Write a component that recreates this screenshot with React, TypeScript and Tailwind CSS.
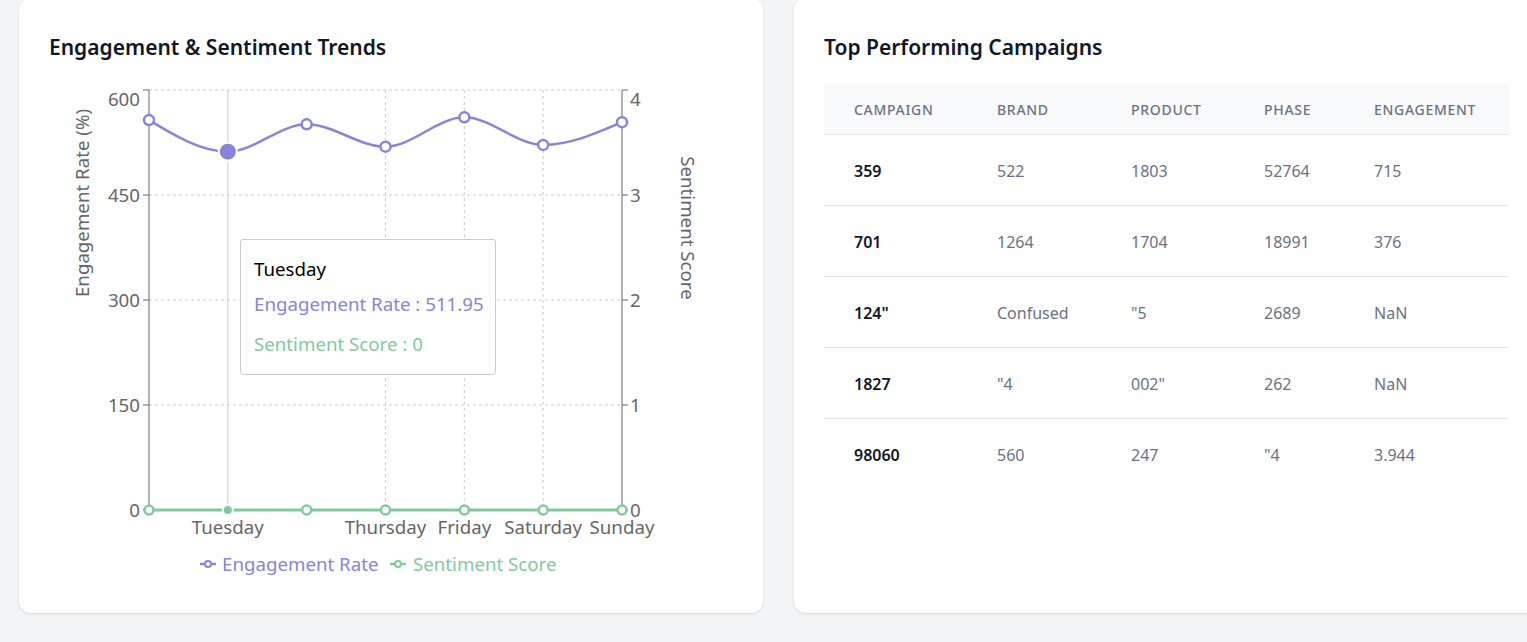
import React from "react";

const PURPLE = "#8884d8";
const GREEN = "#82ca9d";
const AXIS = "#666";
const GRID = "#ccc";

const days = ["Monday", "Tuesday", "Wednesday", "Thursday", "Friday", "Saturday", "Sunday"];
const engagement = [557, 511.95, 551, 519, 561, 521.5, 554];

// plot box in page coordinates
const LEFT = 149;
const RIGHT = 622;
const TOP = 90;
const BOTTOM = 510;

const xAt = (i: number) => LEFT + ((RIGHT - LEFT) / 6) * i;
const yLeft = (v: number) => BOTTOM - (v / 600) * (BOTTOM - TOP);

type Pt = [number, number];

// same maths as d3 curveMonotoneX
function monotonePath(pts: Pt[]) {
  const n = pts.length;
  const sign = (v: number) => (v < 0 ? -1 : 1);
  const t: number[] = new Array(n).fill(0);
  for (let i = 1; i < n - 1; i++) {
    const [x0, y0] = pts[i - 1];
    const [x1, y1] = pts[i];
    const [x2, y2] = pts[i + 1];
    const h0 = x1 - x0;
    const h1 = x2 - x1;
    const s0 = (y1 - y0) / h0;
    const s1 = (y2 - y1) / h1;
    const p = (s0 * h1 + s1 * h0) / (h0 + h1);
    t[i] = (sign(s0) + sign(s1)) * Math.min(Math.abs(s0), Math.abs(s1), 0.5 * Math.abs(p)) || 0;
  }
  const h = pts[1][0] - pts[0][0];
  t[0] = (3 * (pts[1][1] - pts[0][1])) / h / 2 - t[1] / 2;
  const hl = pts[n - 1][0] - pts[n - 2][0];
  t[n - 1] = (3 * (pts[n - 1][1] - pts[n - 2][1])) / hl / 2 - t[n - 2] / 2;

  let d = `M${pts[0][0]},${pts[0][1]}`;
  for (let i = 0; i < n - 1; i++) {
    const [x0, y0] = pts[i];
    const [x1, y1] = pts[i + 1];
    const dx = (x1 - x0) / 3;
    d += `C${x0 + dx},${y0 + dx * t[i]},${x1 - dx},${y1 - dx * t[i + 1]},${x1},${y1}`;
  }
  return d;
}

const leftTicks = [
  { v: 0, y: 510, ly: 510 },
  { v: 150, y: 405, ly: 405 },
  { v: 300, y: 300, ly: 300 },
  { v: 450, y: 195, ly: 195 },
  { v: 600, y: 90, ly: 99 },
];
const rightTicks = [
  { v: 0, y: 510, ly: 510 },
  { v: 1, y: 405, ly: 405 },
  { v: 2, y: 300, ly: 300 },
  { v: 3, y: 195, ly: 195 },
  { v: 4, y: 90, ly: 99 },
];
const shownDays = [1, 3, 4, 5, 6];

function TrendChart() {
  const purplePts: Pt[] = engagement.map((v, i) => [xAt(i), yLeft(v)]);
  const greenPts: Pt[] = days.map((_, i) => [xAt(i), BOTTOM]);

  return (
    <div className="relative mt-[14px] h-[515px] w-[684px]">
      <svg width={684} height={515} viewBox="49 75 684 515" fontSize={18.7}>
        {/* grid */}
        {[90, 195, 300, 405].map((y) => (
          <line key={y} x1={LEFT} x2={RIGHT} y1={y} y2={y} stroke={GRID} strokeDasharray="3 3" />
        ))}
        {[3, 4, 5].map((i) => (
          <line key={i} x1={xAt(i)} x2={xAt(i)} y1={TOP} y2={BOTTOM} stroke={GRID} strokeDasharray="3 3" />
        ))}

        {/* axes */}
        <line x1={LEFT} x2={LEFT} y1={TOP} y2={BOTTOM} stroke={AXIS} />
        <line x1={RIGHT} x2={RIGHT} y1={TOP} y2={BOTTOM} stroke={AXIS} />
        <line x1={LEFT} x2={RIGHT} y1={BOTTOM} y2={BOTTOM} stroke={AXIS} />
        {leftTicks.map((t) => (
          <g key={t.v}>
            <line x1={LEFT - 6} x2={LEFT} y1={t.y} y2={t.y} stroke={AXIS} />
            <text x={140} y={t.ly} dy="0.355em" textAnchor="end" fill={AXIS}>
              {t.v}
            </text>
          </g>
        ))}
        {rightTicks.map((t) => (
          <g key={t.v}>
            <line x1={RIGHT} x2={RIGHT + 6} y1={t.y} y2={t.y} stroke={AXIS} />
            <text x={630} y={t.ly} dy="0.355em" textAnchor="start" fill={AXIS}>
              {t.v}
            </text>
          </g>
        ))}
        {shownDays.map((i) => (
          <text key={i} x={xAt(i)} y={527} dy="0.355em" textAnchor="middle" fill={AXIS}>
            {days[i]}
          </text>
        ))}
        <text
          x={82}
          y={203}
          dy="0.355em"
          textAnchor="middle"
          fill={AXIS}
          transform="rotate(-90 82 203)"
        >
          Engagement Rate (%)
        </text>
        <text
          x={688}
          y={228}
          dy="0.355em"
          textAnchor="middle"
          fill={AXIS}
          transform="rotate(90 688 228)"
        >
          Sentiment Score
        </text>

        {/* hover cursor */}
        <line x1={xAt(1)} x2={xAt(1)} y1={TOP} y2={BOTTOM} stroke={GRID} />

        {/* lines */}
        <path d={monotonePath(purplePts)} fill="none" stroke={PURPLE} strokeWidth={2.5} />
        <path d={monotonePath(greenPts)} fill="none" stroke={GREEN} strokeWidth={3} />

        {purplePts.map(([x, y], i) =>
          i === 1 ? (
            <circle key={i} cx={x} cy={y} r={9} fill={PURPLE} stroke="#fff" strokeWidth={2} />
          ) : (
            <circle key={i} cx={x} cy={y} r={5} fill="#fff" stroke={PURPLE} strokeWidth={2.5} />
          )
        )}
        {greenPts.map(([x, y], i) =>
          i === 1 ? (
            <circle key={i} cx={x} cy={y} r={5} fill={GREEN} stroke="#fff" strokeWidth={2} />
          ) : (
            <circle key={i} cx={x} cy={y} r={4.5} fill="#fff" stroke={GREEN} strokeWidth={2.5} />
          )
        )}

        {/* legend */}
        <g>
          <line x1={200} x2={216} y1={564} y2={564} stroke={PURPLE} strokeWidth={2.5} />
          <circle cx={208} cy={564} r={3} fill="#fff" stroke={PURPLE} strokeWidth={2} />
          <text x={222} y={564} dy="0.355em" fill={PURPLE}>
            Engagement Rate
          </text>
          <line x1={390} x2={406} y1={564} y2={564} stroke={GREEN} strokeWidth={2.5} />
          <circle cx={398} cy={564} r={3} fill="#fff" stroke={GREEN} strokeWidth={2} />
          <text x={413} y={564} dy="0.355em" fill={GREEN}>
            Sentiment Score
          </text>
        </g>
      </svg>

      <div className="absolute left-[191px] top-[164px] w-[256px] whitespace-nowrap rounded-[3px] border border-[#ccc] bg-white pb-[18px] pl-[13px] pr-[8px] pt-[17px] text-[18.7px] leading-[24px]">
        <p className="text-black">Tuesday</p>
        <p className="mt-[11px] text-[#8884d8]">Engagement Rate : 511.95</p>
        <p className="mt-[16px] text-[#82ca9d]">Sentiment Score : 0</p>
      </div>
    </div>
  );
}

const campaigns = [
  ["359", "522", "1803", "52764", "715"],
  ["701", "1264", "1704", "18991", "376"],
  ['124"', "Confused", '"5', "2689", "NaN"],
  ["1827", '"4', '002"', "262", "NaN"],
  ["98060", "560", "247", '"4', "3.944"],
];

function CampaignTable() {
  return (
    <table className="mt-[23px] w-[685px] table-fixed border-collapse text-left">
      <thead className="bg-gray-50">
        <tr className="border-b border-gray-200">
          <th className="w-[143px] px-[30px] pb-[14px] pt-[16px] text-sm font-medium uppercase leading-5 tracking-wider text-gray-500">
            Campaign
          </th>
          <th className="w-[134px] px-[30px] pb-[14px] pt-[16px] text-sm font-medium uppercase leading-5 tracking-wider text-gray-500">
            Brand
          </th>
          <th className="w-[133px] px-[30px] pb-[14px] pt-[16px] text-sm font-medium uppercase leading-5 tracking-wider text-gray-500">
            Product
          </th>
          <th className="w-[110px] px-[30px] pb-[14px] pt-[16px] text-sm font-medium uppercase leading-5 tracking-wider text-gray-500">
            Phase
          </th>
          <th className="w-[165px] px-[30px] pb-[14px] pt-[16px] text-sm font-medium uppercase leading-5 tracking-wider text-gray-500">
            Engagement
          </th>
        </tr>
      </thead>
      <tbody className="divide-y divide-gray-200">
        {campaigns.map((row, r) => (
          <tr key={r}>
            {row.map((cell, c) => (
              <td
                key={c}
                className={
                  c === 0
                    ? "px-[30px] pb-[23px] pt-[25px] text-base font-semibold leading-[22px] text-gray-900"
                    : "px-[30px] pb-[23px] pt-[25px] text-base leading-[22px] text-gray-500"
                }
              >
                {cell}
              </td>
            ))}
          </tr>
        ))}
      </tbody>
    </table>
  );
}

export default function App() {
  return (
    <div className="h-[642px] w-[1527px] overflow-hidden bg-gray-100 font-['Noto_Sans',sans-serif]">
      <div className="flex items-start gap-[31px] pl-[19px]">
        <div className="-mt-[2px] h-[615px] w-[744px] shrink-0 rounded-xl bg-white px-[30px] pt-[35px] shadow-sm">
          <h2 className="text-[21px] font-semibold leading-7 text-gray-900">Engagement &amp; Sentiment Trends</h2>
          <TrendChart />
        </div>
        <div className="-mt-[2px] h-[615px] w-[745px] shrink-0 rounded-xl bg-white px-[30px] pt-[35px] shadow-sm">
          <h2 className="text-[21px] font-semibold leading-7 text-gray-900">Top Performing Campaigns</h2>
          <CampaignTable />
        </div>
      </div>
    </div>
  );
}
